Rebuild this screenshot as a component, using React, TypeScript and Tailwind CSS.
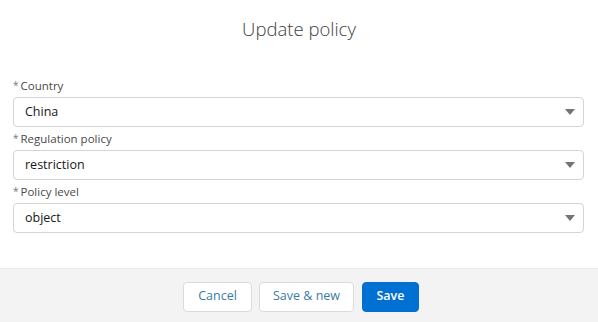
import { useState } from "react"

const FIELDS = [
  { label: "Country", value: "China" },
  { label: "Regulation policy", value: "restriction" },
  { label: "Policy level", value: "object" },
]

function Caret() {
  return (
    <svg width="10" height="6" viewBox="0 0 10 6" className="shrink-0">
      <path d="M0 0h10L5 6z" fill="#747474" />
    </svg>
  )
}

export default function App() {
  const [form] = useState(FIELDS)

  return (
    <div
      className="w-[598px] h-[322px] bg-white flex flex-col overflow-hidden"
      style={{ fontFamily: '"Open Sans", "Noto Sans", sans-serif' }}
    >
      <div className="h-[56px] flex items-center justify-center">
        <h1 className="text-[18.5px] font-light text-[#3e3e3c] mt-[2px]">Update policy</h1>
      </div>

      <div className="flex-1 pl-[13px] pr-[14px] pt-[21px] flex flex-col gap-[3px]">
        {form.map((f) => (
          <div key={f.label}>
            <label className="flex items-center h-[18px] mb-[2px] text-[11.5px] text-[#4a4a48]">
              <span className="text-[#777] mr-[2px] text-[10px] -mt-[2px]">*</span>
              {f.label}
            </label>
            <div className="h-[30px] flex items-center justify-between border border-[#d4d4d4] rounded-[4px] pl-[11px] pr-[8px] text-[12.5px] text-[#181818]">
              <span>{f.value}</span>
              <Caret />
            </div>
          </div>
        ))}
      </div>

      <div className="h-[54px] bg-[#f3f3f3] border-t border-[#ececec] flex items-center justify-center pl-[4px] pt-[2px]">
        <button className="h-[30px] w-[69px] bg-white border border-[#dddbda] rounded-[4px] text-[12.5px] text-[#3a7ca5]">
          Cancel
        </button>
        <button className="ml-[7px] h-[30px] w-[95px] bg-white border border-[#dddbda] rounded-[4px] text-[12.5px] text-[#3a7ca5]">
          Save &amp; new
        </button>
        <button className="ml-[8px] h-[30px] w-[57px] bg-[#0070d2] border border-[#0070d2] rounded-[4px] text-[12.5px] font-semibold text-white">
          Save
        </button>
      </div>
    </div>
  )
}
